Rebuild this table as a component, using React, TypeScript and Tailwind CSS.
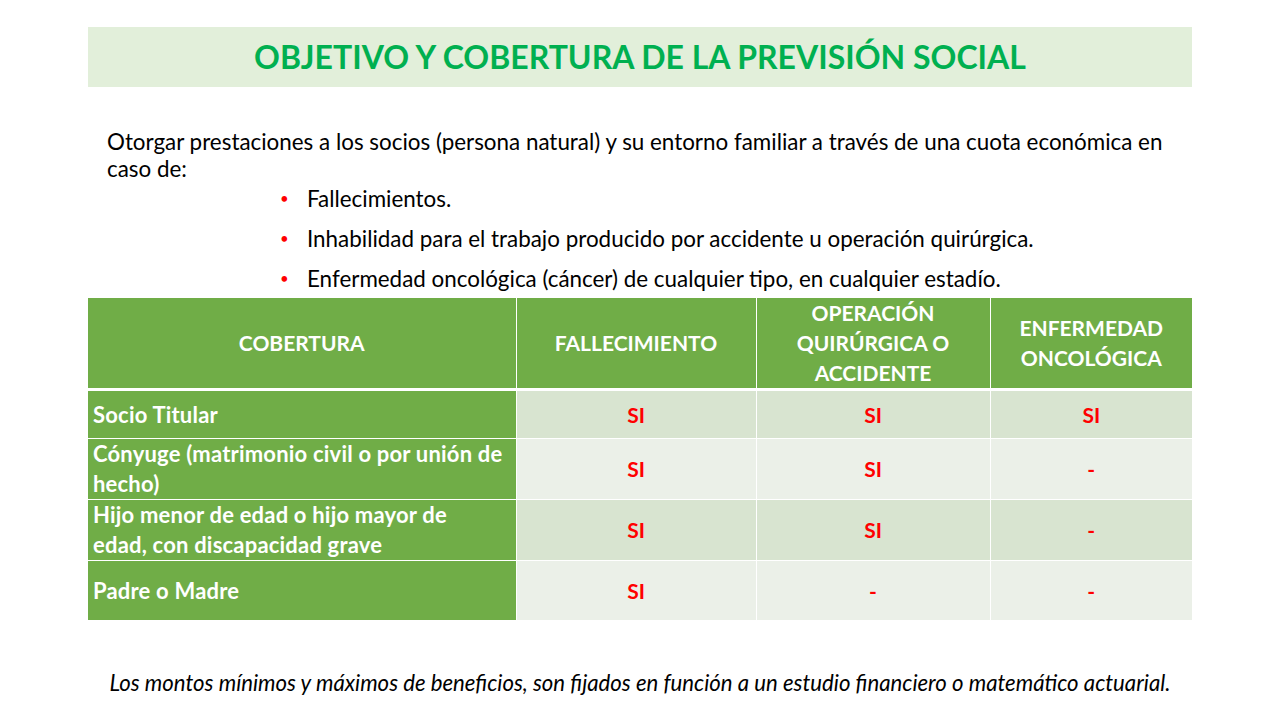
const rows = [
  { label: ["Socio Titular"], cells: ["SI", "SI", "SI"], bg: "bg-[#d8e4d0]", h: "h-[49px]" },
  { label: ["Cónyuge (matrimonio civil o por unión de", "hecho)"], cells: ["SI", "SI", "-"], bg: "bg-[#ebf0e8]", h: "h-[60px]" },
  { label: ["Hijo menor de edad o hijo mayor de", "edad, con discapacidad grave"], cells: ["SI", "SI", "-"], bg: "bg-[#d8e4d0]", h: "h-[60px]" },
  { label: ["Padre o Madre"], cells: ["SI", "-", "-"], bg: "bg-[#ebf0e8]", h: "h-[60px]" },
];

const bullets = [
  "Fallecimientos.",
  "Inhabilidad para el trabajo producido por accidente u operación quirúrgica.",
  "Enfermedad oncológica (cáncer) de cualquier tipo, en cualquier estadío.",
];

export default function App() {
  return (
    <div className="w-[1280px] h-[720px] bg-white font-['Lato',sans-serif] overflow-hidden">
      <div className="pt-[27px] px-[88px]">
        <div className="h-[60px] bg-[#e2efda] flex items-center justify-center">
          <h1 className="text-[#00b050] font-bold text-[32px]">
            OBJETIVO Y COBERTURA DE LA PREVISIÓN SOCIAL
          </h1>
        </div>
      </div>

      <div className="pl-[107px] pr-[100px] pt-[41px] text-[22.4px] leading-[27px] text-black">
        <p>
          Otorgar prestaciones a los socios (persona natural) y su entorno familiar a través de una cuota económica en caso de:
        </p>
        <ul className="pl-[173px] mt-[3px] flex flex-col gap-[13px]">
          {bullets.map((b) => (
            <li key={b} className="flex">
              <span className="w-[27px] text-[#ff0000] text-[15px]">•</span>
              <span>{b}</span>
            </li>
          ))}
        </ul>
      </div>

      <div className="px-[88px] mt-[6px]">
        <table className="w-full border-collapse table-fixed">
          <colgroup>
            <col className="w-[428px]" />
            <col className="w-[240px]" />
            <col className="w-[234px]" />
            <col />
          </colgroup>
          <thead>
            <tr className="h-[90px] bg-[#70ad47] text-white font-bold text-[21px] leading-[30px]">
              <th className="border-r border-b-[3px] border-white">COBERTURA</th>
              <th className="border-r border-b-[3px] border-white">FALLECIMIENTO</th>
              <th className="border-r border-b-[3px] border-white px-6">OPERACIÓN QUIRÚRGICA O ACCIDENTE</th>
              <th className="border-b-[3px] border-white px-4">ENFERMEDAD ONCOLÓGICA</th>
            </tr>
          </thead>
          <tbody>
            {rows.map((r) => (
              <tr key={r.label[0]} className={r.h}>
                <td className="bg-[#70ad47] text-white font-bold text-[22px] leading-[30px] tracking-[0.2px] px-[5px] border-r border-b border-white">
                  {r.label.map((l) => (
                    <div key={l} className="whitespace-nowrap">{l}</div>
                  ))}
                </td>
                {r.cells.map((c, i) => (
                  <td
                    key={i}
                    className={`${r.bg} text-[#ff0000] font-bold text-[21px] text-center border-b border-white ${i < 2 ? "border-r" : ""}`}
                  >
                    {c}
                  </td>
                ))}
              </tr>
            ))}
          </tbody>
        </table>
      </div>

      <p className="mt-[48px] text-center italic text-[22.2px] leading-[28px]">
        Los montos mínimos y máximos de beneficios, son fijados en función a un estudio financiero o matemático actuarial.
      </p>
    </div>
  );
}
